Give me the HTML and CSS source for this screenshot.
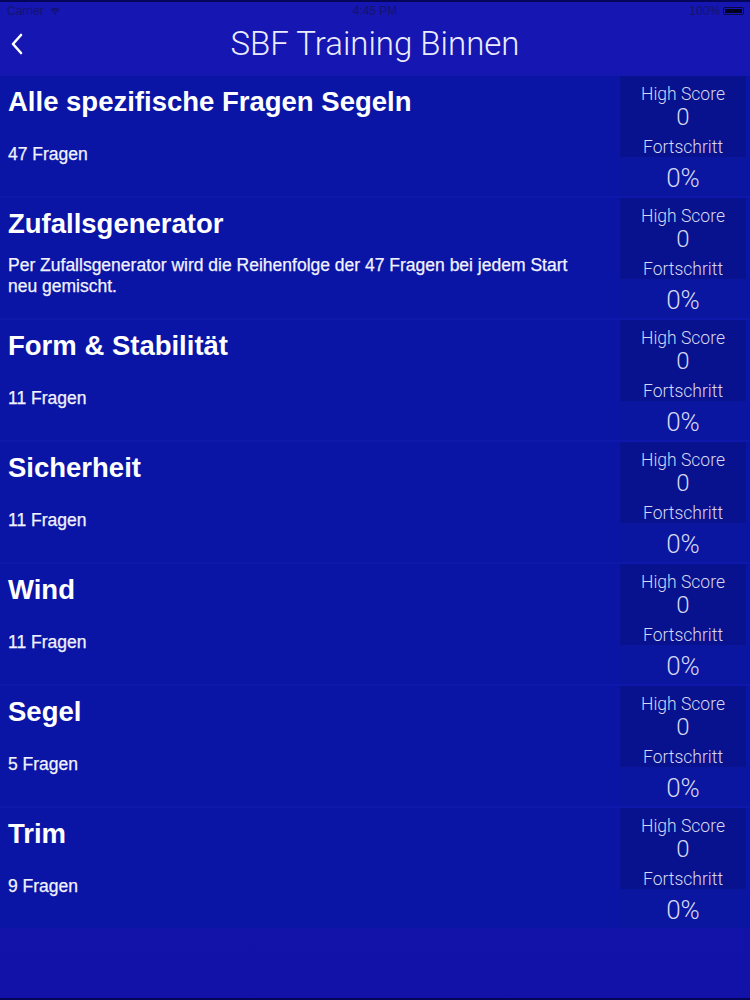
FILE: index.html
```html
<!DOCTYPE html>
<html lang="de">
<head>
<meta charset="utf-8">
<title>SBF Training Binnen</title>
<link rel="stylesheet" href="styles.css">
</head>
<body>
<div class="screen">
  <div class="status">
    <div class="status-left">Carrier
      <svg class="wifi" width="10" height="8" viewBox="0 0 10 8"><path d="M5 7.5 L3.6 6 A2 2 0 0 1 6.4 6 Z" fill="#12126a"/><path d="M2.2 4.6 A4 4 0 0 1 7.8 4.6" stroke="#12126a" stroke-width="1.2" fill="none"/><path d="M0.8 3 A6 6 0 0 1 9.2 3" stroke="#12126a" stroke-width="1.2" fill="none"/></svg>
    </div>
    <div class="status-center">4:45 PM</div>
    <div class="status-right">100% <span class="battery"><span class="battery-fill"></span></span></div>
  </div>
  <div class="nav">
    <svg class="back" width="14" height="22" viewBox="0 0 14 22"><path d="M11 2 L3 11 L11 20" stroke="#ffffff" stroke-width="2.6" fill="none" stroke-linecap="round" stroke-linejoin="round"/></svg>
    <div class="nav-title">SBF Training Binnen</div>
  </div>
  <div class="list">
    <div class="row">
      <div class="main"><div class="title">Alle spezifische Fragen Segeln</div><div class="sub"><span>47 Fragen</span></div></div>
      <div class="stats"><div class="stats-top"><div class="lbl">High Score</div><div class="num">0</div><div class="lbl lbl2">Fortschritt</div></div><div class="stats-bottom">0%</div></div>
    </div>
    <div class="row">
      <div class="main"><div class="title">Zufallsgenerator</div><div class="sub"><span>Per Zufallsgenerator wird die Reihenfolge der 47 Fragen bei jedem Start neu gemischt.</span></div></div>
      <div class="stats"><div class="stats-top"><div class="lbl">High Score</div><div class="num">0</div><div class="lbl lbl2">Fortschritt</div></div><div class="stats-bottom">0%</div></div>
    </div>
    <div class="row">
      <div class="main"><div class="title">Form &amp; Stabilität</div><div class="sub"><span>11 Fragen</span></div></div>
      <div class="stats"><div class="stats-top"><div class="lbl">High Score</div><div class="num">0</div><div class="lbl lbl2">Fortschritt</div></div><div class="stats-bottom">0%</div></div>
    </div>
    <div class="row">
      <div class="main"><div class="title">Sicherheit</div><div class="sub"><span>11 Fragen</span></div></div>
      <div class="stats"><div class="stats-top"><div class="lbl">High Score</div><div class="num">0</div><div class="lbl lbl2">Fortschritt</div></div><div class="stats-bottom">0%</div></div>
    </div>
    <div class="row">
      <div class="main"><div class="title">Wind</div><div class="sub"><span>11 Fragen</span></div></div>
      <div class="stats"><div class="stats-top"><div class="lbl">High Score</div><div class="num">0</div><div class="lbl lbl2">Fortschritt</div></div><div class="stats-bottom">0%</div></div>
    </div>
    <div class="row">
      <div class="main"><div class="title">Segel</div><div class="sub"><span>5 Fragen</span></div></div>
      <div class="stats"><div class="stats-top"><div class="lbl">High Score</div><div class="num">0</div><div class="lbl lbl2">Fortschritt</div></div><div class="stats-bottom">0%</div></div>
    </div>
    <div class="row">
      <div class="main"><div class="title">Trim</div><div class="sub"><span>9 Fragen</span></div></div>
      <div class="stats"><div class="stats-top"><div class="lbl">High Score</div><div class="num">0</div><div class="lbl lbl2">Fortschritt</div></div><div class="stats-bottom">0%</div></div>
    </div>
  </div>
  <div class="footer"></div>
</div>
</body>
</html>
```

FILE: styles.css
```css
html, body {
  margin: 0;
  padding: 0;
  background: #1212a6;
}
.screen {
  width: 750px;
  height: 1000px;
  box-sizing: border-box;
  border-top: 2px solid #05055a;
  border-bottom: 2px solid #05055a;
  background: linear-gradient(#1616b2, #1212a8);
  display: flex;
  flex-direction: column;
  font-family: "Liberation Sans", Arial, sans-serif;
  color: #ffffff;
  overflow: hidden;
}
.status {
  height: 18px;
  display: flex;
  align-items: center;
  justify-content: space-between;
  padding: 0 6px 0 7px;
  font-size: 12px;
  color: #14146e;
  position: relative;
}
.status-left {
  display: flex;
  align-items: center;
  gap: 6px;
}
.status-center {
  position: absolute;
  left: 0;
  right: 0;
  text-align: center;
  pointer-events: none;
}
.status-right {
  display: flex;
  align-items: center;
  gap: 3px;
}
.battery {
  width: 21px;
  height: 8px;
  border: 1px solid #0a0a40;
  border-radius: 2px;
  box-sizing: border-box;
  padding: 1px;
  display: flex;
}
.battery-fill {
  flex: 1;
  background: #000020;
}
.nav {
  height: 56px;
  display: flex;
  align-items: center;
  position: relative;
  padding-left: 10px;
  padding-bottom: 8px;
  box-sizing: border-box;
}
.back {
  display: block;
}
.nav-title {
  position: absolute;
  left: 0;
  right: 0;
  top: 4px;
  text-align: center;
  font-family: Roboto, "Liberation Sans", sans-serif;
  font-weight: 300;
  font-size: 33px;
  color: #ececff;
}
.list {
  display: flex;
  flex-direction: column;
  gap: 2px;
  background: #0e19ab;
}
.row {
  height: 120px;
  display: flex;
  background: #0a15a6;
}
.main {
  flex: 1;
  padding-left: 8px;
  display: flex;
  flex-direction: column;
}
.title {
  height: 52px;
  line-height: 52px;
  font-size: 27.5px;
  font-weight: bold;
  color: #ffffff;
  white-space: nowrap;
}
.sub {
  height: 52px;
  display: flex;
  align-items: center;
  font-size: 17.5px;
  line-height: 21px;
  color: #f2f2ff;
  -webkit-text-stroke: 0.25px #f2f2ff;
  padding-right: 20px;
}
.stats {
  width: 126px;
  margin-right: 4px;
  display: flex;
  flex-direction: column;
  font-family: Roboto, "Liberation Sans", sans-serif;
  font-weight: 300;
  color: #d6d9f2;
  text-align: center;
}
.stats-top {
  height: 81px;
  background: #08128f;
  padding-top: 8px;
  box-sizing: border-box;
}
.lbl {
  font-size: 17.5px;
  line-height: 20px;
}
.lbl2 {
  margin-top: 8px;
  line-height: 18px;
}
.num {
  font-size: 24px;
  line-height: 26px;
}
.stats-bottom {
  height: 39px;
  box-sizing: border-box;
  padding-top: 3px;
  line-height: 36px;
  font-size: 26px;
  background: #0a16a0;
}
.footer {
  flex: 1;
}
```
